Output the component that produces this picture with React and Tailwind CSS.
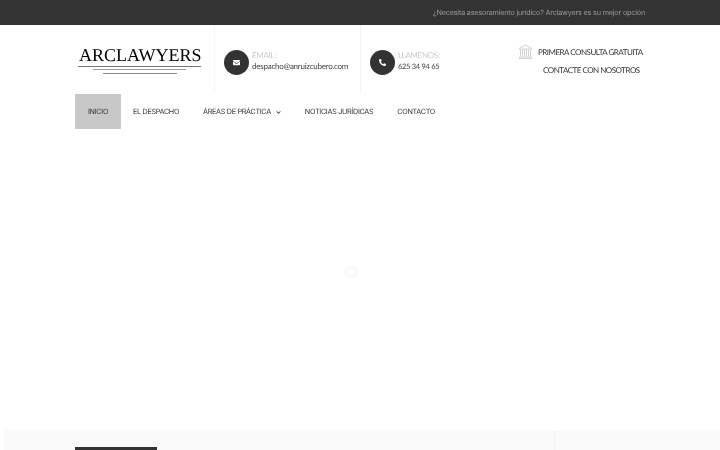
import React from "react";
import { FaEnvelope, FaPhoneAlt, FaChevronDown } from "react-icons/fa";

const navItems = [
  { label: "INICIO", cls: "w-[46px] bg-[#c8c8c8] justify-center" },
  { label: "EL DESPACHO", cls: "ml-[12px]" },
  { label: "ÁREAS DE PRÁCTICA", cls: "ml-[24px]", caret: true },
  { label: "NOTICIAS JURÍDICAS", cls: "ml-[24px]" },
  { label: "CONTACTO", cls: "ml-[24px]" },
];

function ContactBlock({ icon, label, value, cls, valueCls = "" }) {
  return (
    <div className={"flex items-center h-[68px] pt-[7px] border-l border-[#f5f5f5] " + cls}>
      <div className="w-[25px] h-[25px] rounded-full bg-[#333333] text-white flex items-center justify-center shrink-0">
        {icon}
      </div>
      <div className="ml-[3px] mb-[5px] flex flex-col gap-[1px] font-['Lato',sans-serif] text-[8px] leading-[10px] tracking-[-0.25px]">
        <span className="text-[#a0a0a0] font-light">{label}</span>
        <span className={"text-[#444444] " + valueCls}>{value}</span>
      </div>
    </div>
  );
}

function BankIcon() {
  return (
    <svg width="15" height="15" viewBox="0 0 15 15" fill="none" stroke="#c6c6c6" strokeWidth="0.8">
      <path d="M1 4.5 7.5 1 14 4.5M1 5h13M1 13h13M0.5 14.5h14" />
      <path d="M2.5 5.5v7M4.5 5.5v7M6.5 5.5v7M8.5 5.5v7M10.5 5.5v7M12.5 5.5v7" />
    </svg>
  );
}

export default function App() {
  return (
    <div className="w-[720px] h-[450px] overflow-hidden bg-white flex flex-col relative font-['Inter',sans-serif] [text-rendering:geometricPrecision] blur-[0.3px]">
      {/* Top bar */}
      <div className="h-[25px] pt-[1px] bg-[#333333] flex items-center justify-end pr-[75px] shrink-0">
        <span className="text-[7.2px] tracking-[-0.17px] text-[#9a9a9a]">
          ¿Necesita asesoramiento jurídico? Arclawyers es su mejor opción
        </span>
      </div>

      {/* Header */}
      <div className="flex h-[68px] pl-[78px] shrink-0">
        <div className="w-[136px] pt-[21px] shrink-0">
          <div className="w-[123px] pl-[1px] font-['Liberation_Serif',serif] text-[18px] leading-[18px] text-black whitespace-nowrap">
            ARCLAWYERS
          </div>
          <div className="w-[123px] flex flex-col items-center mt-[2px]">
            <div className="w-full h-px bg-[#777777]" />
            <div className="w-[93px] h-px mt-[2px] bg-[#999999]" />
            <div className="w-[74px] h-px mt-[3px] bg-[#888888]" />
          </div>
        </div>
        <ContactBlock
          cls="w-[146px] pl-[9px]"
          icon={<FaEnvelope size={7} />}
          label="EMAIL :"
          value="despacho@anruizcubero.com"
        />
        <ContactBlock
          cls="w-[148px] pl-[9px]"
          icon={<FaPhoneAlt size={7} />}
          label="LLAMENOS:"
          value="625 34 94 65"
          valueCls="text-[7.5px] tracking-[-0.3px] translate-y-[1px]"
        />
        <div className="flex flex-col pl-[10px] pt-[19px] font-['Lato',sans-serif] text-[8px] leading-[10px] tracking-[-0.5px] text-[#333333]">
          <div className="flex items-center">
            <BankIcon />
            <span className="ml-[5px]">PRIMERA CONSULTA GRATUITA</span>
          </div>
          <span className="mt-[6px] pl-[25px]">CONTACTE CON NOSOTROS</span>
        </div>
      </div>

      {/* Nav */}
      <nav className="flex h-[35px] mt-[1px] pl-[75px] shrink-0 text-[7.2px] tracking-[-0.3px] text-[#333333]">
        {navItems.map((item) => (
          <div key={item.label} className={"flex items-center pt-[1px] whitespace-nowrap " + item.cls}>
            {item.label}
            {item.caret && <FaChevronDown size={5} className="ml-[5px]" />}
          </div>
        ))}
      </nav>

      <div className="flex-1" />

      {/* Footer strip */}
      <div className="h-[20px] ml-[4px] bg-[#fafafa] flex shrink-0">
        <div className="w-[551px] pl-[71px] pt-[17px] border-r border-[#f3f3f3]">
          <div className="w-[82px] h-[3px] bg-[#333333]" />
        </div>
      </div>

      {/* Page loader */}
      <svg className="absolute left-[343px] top-[263px]" width="20" height="18" viewBox="0 0 20 18" fill="none">
        <circle cx="8.5" cy="9" r="5" stroke="#fafafa" strokeWidth="4" />
        <circle cx="16" cy="8.5" r="1" fill="#fcfcfc" />
      </svg>
    </div>
  );
}
